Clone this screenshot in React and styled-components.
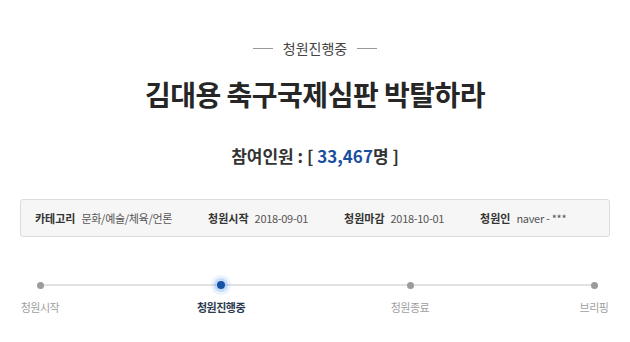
import React from "react";
import styled, { createGlobalStyle } from "styled-components";

const Global = createGlobalStyle`
  html, body { margin: 0; padding: 0; background: #fff; }
  body { font-family: "Noto Sans CJK KR", "Noto Sans", sans-serif; color: #333; }
`;

const Page = styled.div`
  width: 590px;
  margin: 0 auto;
  padding-top: 38px;
  display: flex;
  flex-direction: column;
  align-items: center;
`;

const Status = styled.div`
  display: flex;
  align-items: center;
  gap: 10px;
  font-size: 14px;
  line-height: 20px;
  color: #444;
  &::before, &::after {
    content: "";
    width: 20px;
    height: 1px;
    background: #999;
  }
`;

const Title = styled.h1`
  margin: 18px 0 0;
  font-size: 28px;
  line-height: 36px;
  font-weight: 700;
  color: #262626;
  letter-spacing: -0.5px;
`;

const Count = styled.div`
  margin-top: 32px;
  font-size: 17px;
  line-height: 24px;
  font-weight: 700;
  color: #333;
`;

const Num = styled.span`
  color: #1a4e9e;
`;

const InfoBox = styled.div`
  margin-top: 31px;
  align-self: stretch;
  box-sizing: border-box;
  height: 38px;
  border: 1px solid #dcdcdc;
  border-radius: 3px;
  background: #f6f6f6;
  display: flex;
  align-items: center;
  padding-left: 14px;
  gap: 36px;
`;

const InfoItem = styled.div`
  display: flex;
  align-items: center;
  gap: 6px;
  font-size: 11px;
  white-space: nowrap;
`;

const Label = styled.span`
  font-weight: 700;
  color: #333;
`;

const Value = styled.span`
  color: #555;
  letter-spacing: -0.3px;
`;

const Track = styled.div`
  position: relative;
  align-self: stretch;
  margin-top: 39px;
  display: flex;
  &::before {
    content: "";
    position: absolute;
    left: 20px;
    right: 16px;
    top: 8px;
    height: 2px;
    background: #e2e2e2;
  }
`;

const Step = styled.div`
  position: relative;
  width: 40px;
  flex-shrink: 0;
  margin-left: ${(p) => p.$gap}px;
  display: flex;
  flex-direction: column;
  align-items: center;
`;

const DotWrap = styled.div`
  height: 18px;
  display: flex;
  align-items: center;
  justify-content: center;
`;

const Dot = styled.span`
  width: ${(p) => (p.$active ? 8 : 7)}px;
  height: ${(p) => (p.$active ? 8 : 7)}px;
  border-radius: 50%;
  background: ${(p) => (p.$active ? "#1552a8" : "#9b9b9b")};
  box-shadow: ${(p) =>
    p.$active
      ? "0 0 0 3px rgba(60,140,240,0.22), 0 0 0 6px rgba(60,140,240,0.10)"
      : "none"};
`;

const StepLabel = styled.span`
  margin-top: 5px;
  font-size: 11px;
  line-height: 16px;
  letter-spacing: -0.5px;
  white-space: nowrap;
  color: ${(p) => (p.$active ? "#2c3a4f" : "#a0a0a0")};
  font-weight: ${(p) => (p.$active ? 700 : 400)};
`;

const steps = [
  { label: "청원시작", gap: 0 },
  { label: "청원진행중", gap: 141, active: true },
  { label: "청원종료", gap: 149 },
  { label: "브리핑", gap: 144 },
];

const info = [
  ["카테고리", "문화/예술/체육/언론"],
  ["청원시작", "2018-09-01"],
  ["청원마감", "2018-10-01"],
  ["청원인", "naver - ***"],
];

export default function App() {
  return (
    <>
      <Global />
      <Page>
        <Status>청원진행중</Status>
        <Title>김대용 축구국제심판 박탈하라</Title>
        <Count>
          참여인원 : [ <Num>33,467</Num>명 ]
        </Count>
        <InfoBox>
          {info.map(([l, v]) => (
            <InfoItem key={l}>
              <Label>{l}</Label>
              <Value>{v}</Value>
            </InfoItem>
          ))}
        </InfoBox>
        <Track>
          {steps.map((s) => (
            <Step key={s.label} $gap={s.gap}>
              <DotWrap>
                <Dot $active={s.active} />
              </DotWrap>
              <StepLabel $active={s.active}>{s.label}</StepLabel>
            </Step>
          ))}
        </Track>
      </Page>
    </>
  );
}
